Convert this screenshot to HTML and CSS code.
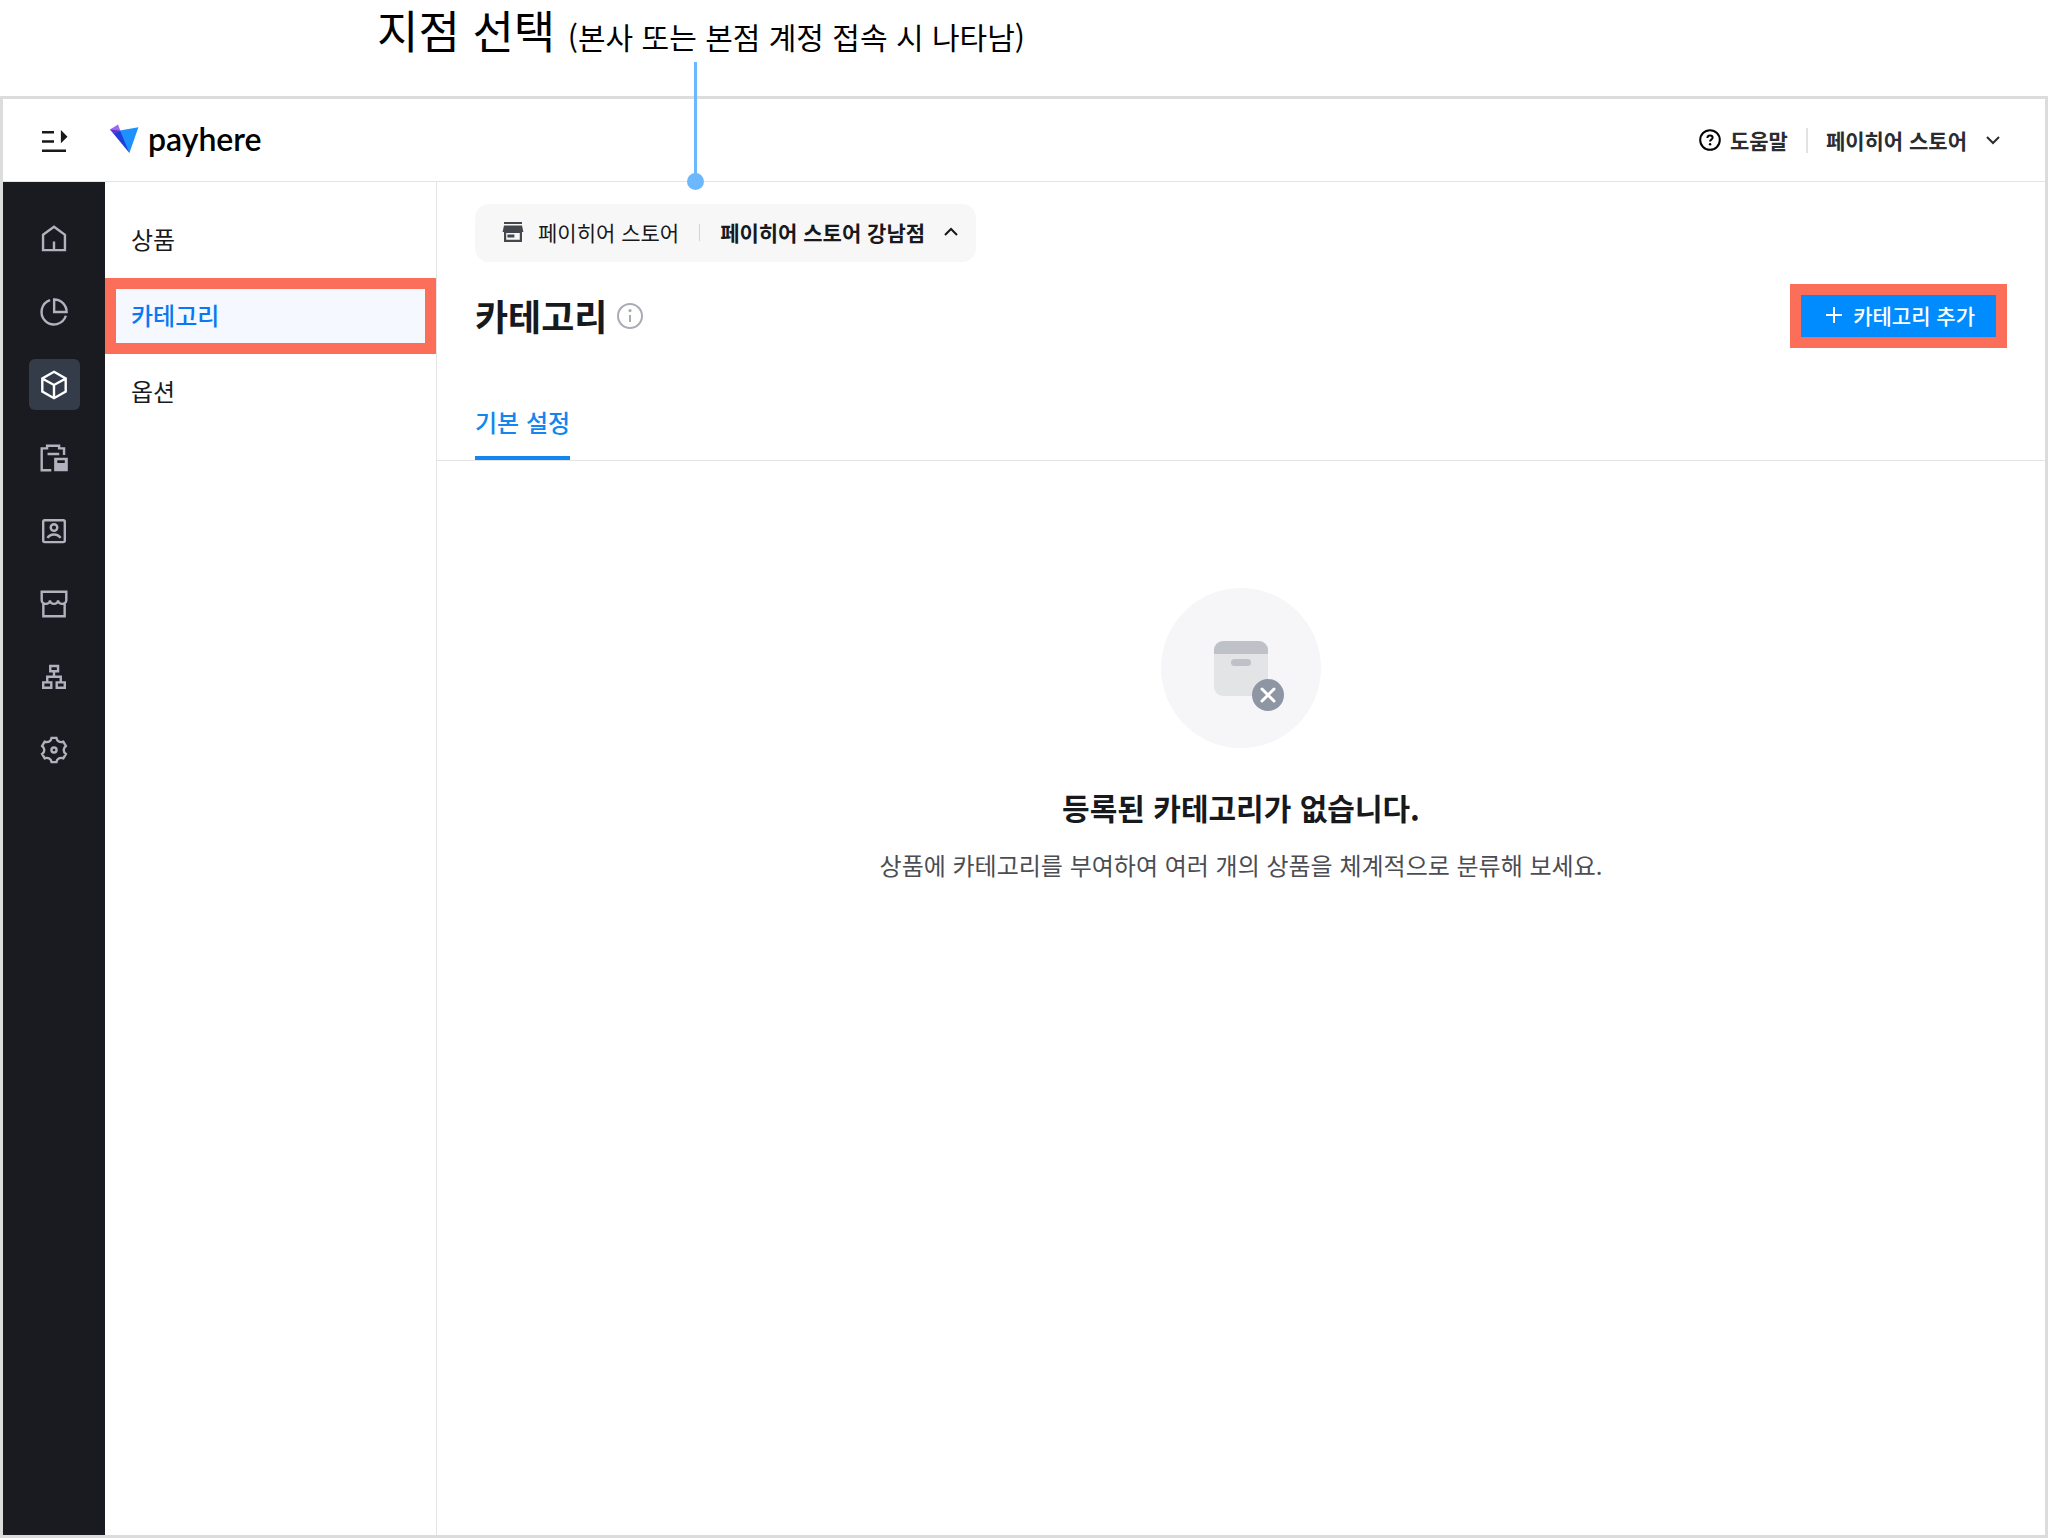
FILE: index.html
```html
<!DOCTYPE html>
<html lang="ko">
<head>
  <meta charset="UTF-8">
  <meta name="viewport" content="width=device-width, initial-scale=1.0">
  <title>카테고리 - payhere</title>
  <link rel="stylesheet" href="styles.css">
</head>
<body>
  <!-- 안내 문구 -->
  <div class="callout">
    <p class="callout-text">지점 선택 <small>(본사 또는 본점 계정 접속 시 나타남)</small></p>
    <span class="callout-line"></span>
  </div>

  <div class="frame">
    <!-- 헤더 -->
    <header class="header">
      <button type="button" class="menu-btn" aria-label="메뉴 펼치기">
        <svg class="icon" viewBox="0 0 24 24">
          <path d="M4 6.8h8M4 13h8M4 19.2h16" stroke-width="1.7"/>
          <path d="M16.6 5.4v8.8l4.4-4.4z" fill="currentColor" stroke="none"/>
        </svg>
      </button>
      <a href="#" class="logo">
        <svg class="logo-mark" viewBox="0 0 29 30">
          <path d="M7 7 28.4 3.2 19.4 29z" fill="#1e90ff"/>
          <path d="M0 5.6 10 6.6 19.4 29z" fill="#1f3fdc"/>
          <path d="M0 5.6 8 .6 10.4 6.7 4 9.2z" fill="#a066f0"/>
          <path d="M0 5.6 10.4 6.7 4.4 9.6z" fill="#5b35c9"/>
        </svg>
        <span>payhere</span>
      </a>
      <div class="header-right">
        <a href="#" class="help">
          <svg class="icon-help" viewBox="0 0 22 22">
            <circle cx="11" cy="11" r="9.8"/>
            <path d="M8.4 8.9c0-1.6 1.1-2.5 2.6-2.5s2.6.9 2.6 2.3c0 1.8-2.5 2-2.5 3.9"/>
            <circle cx="11.1" cy="15.2" r="1.2" fill="currentColor" stroke="none"/>
          </svg>
          도움말
        </a>
        <span class="divider"></span>
        <button type="button" class="account">
          페이히어 스토어
          <svg class="chevron" viewBox="0 0 16 16"><path d="M2 5l6 6 6-6"/></svg>
        </button>
      </div>
    </header>

    <div class="body">
      <!-- 아이콘 메뉴 -->
      <nav class="rail" aria-label="주 메뉴">
        <a href="#" class="rail-item" aria-label="홈">
          <svg class="icon" viewBox="0 0 24 24"><path d="M4.7 9.2 12 3.9l7.3 5.3v10.2H4.7zM12 13.6v5.8"/></svg>
        </a>
        <a href="#" class="rail-item" aria-label="매출">
          <svg class="icon" viewBox="0 0 24 24"><path d="M9.4 4.1a8.3 8.3 0 1 0 10.5 10.4M12.1 3.7V12h8.3a8.3 8.3 0 0 0-8.3-8.3z"/></svg>
        </a>
        <a href="#" class="rail-item active" aria-label="상품">
          <svg class="icon" viewBox="0 0 24 24"><path d="m12 3.2 7.8 4.4v8.8L12 20.8l-7.8-4.4V7.6zM4.4 7.8 12 12l7.6-4.2M12 12v8.6"/></svg>
        </a>
        <a href="#" class="rail-item" aria-label="주문">
          <svg class="icon" viewBox="0 0 24 24">
            <path d="M10.2 20.2H3.8V5.6h3.6V3.8h8v1.8h3.3V10M7.7 9.3h7.8"/>
            <path d="M12.1 11.8h9.1v9.1h-9.1zM14.2 13.5v1.8h5v-1.8z" fill="currentColor" fill-rule="evenodd" stroke="none"/>
          </svg>
        </a>
        <a href="#" class="rail-item" aria-label="고객">
          <svg class="icon" viewBox="0 0 24 24"><rect x="4.8" y="4.8" width="14.4" height="14.6" rx="1"/><circle cx="12" cy="9.7" r="2.2"/><path d="M7.6 16.6c1-1.5 2.6-2.3 4.4-2.3s3.4.8 4.4 2.3"/></svg>
        </a>
        <a href="#" class="rail-item" aria-label="매장">
          <svg class="icon" viewBox="0 0 24 24"><path d="M3.8 3.8h16.4v5.7a2.7 2.4 0 0 1-5.5 0 2.7 2.4 0 0 1-5.4 0 2.7 2.4 0 0 1-5.5 0zM4.9 11.6v8.6h14.2v-8.6"/></svg>
        </a>
        <a href="#" class="rail-item" aria-label="조직">
          <svg class="icon" viewBox="0 0 24 24"><path d="M9.5 4.7h5.2v3.5H9.5zM4.8 15.6h5.4v3.6H4.8zM13.8 15.6h5.4v3.6h-5.4zM12 8.2v3.6M7.5 15.6v-3.8h9v3.8"/></svg>
        </a>
        <a href="#" class="rail-item" aria-label="설정">
          <svg class="icon" viewBox="0 0 24 24"><path d="M10.4 3.9h3.2c.4 2.3 2.2 3.3 4.6 2.6l1.7 2.8c-1.9 1.5-1.9 3.9 0 5.4l-1.7 2.8c-2.4-.7-4.2.3-4.6 2.6h-3.2c-.4-2.3-2.2-3.3-4.6-2.6l-1.7-2.8c1.9-1.5 1.9-3.9 0-5.4l1.7-2.8c2.4.7 4.2-.3 4.6-2.6z"/><circle cx="12" cy="12" r="1.7"/></svg>
        </a>
      </nav>

      <!-- 하위 메뉴 -->
      <nav class="submenu" aria-label="상품 메뉴">
        <a href="#" class="submenu-item">상품</a>
        <a href="#" class="submenu-item active">카테고리</a>
        <a href="#" class="submenu-item">옵션</a>
      </nav>

      <!-- 본문 -->
      <main class="main">
        <div class="top">
          <button type="button" class="store-select">
            <svg class="icon-store" viewBox="0 0 22 22">
              <path d="M2 1h18v2H2zM2 4.4h18L21.4 11H20v10H2V11H.6zM4.2 12v6.8h13.6V12zM5.4 13.4h7v3h-7z" fill="currentColor" fill-rule="evenodd"/>
            </svg>
            <span>페이히어 스토어</span>
            <span class="store-divider"></span>
            <strong>페이히어 스토어 강남점</strong>
            <svg class="chevron" viewBox="0 0 16 16"><path d="M2 11l6-6 6 6"/></svg>
          </button>

          <div class="title-row">
            <h1>카테고리</h1>
            <button type="button" class="info-btn" aria-label="도움말 보기">
              <svg viewBox="0 0 28 28"><circle cx="14" cy="14" r="12"/><path d="M14 13v7"/><circle class="dot" cx="14" cy="8.6" r="1.6"/></svg>
            </button>
            <button type="button" class="add-btn">
              <svg viewBox="0 0 16 16"><path d="M8 0v16M0 8h16"/></svg>
              카테고리 추가
            </button>
          </div>
        </div>

        <div class="tabs">
          <a href="#" class="tab active">기본 설정</a>
        </div>

        <!-- 등록된 항목이 없을 때 -->
        <section class="empty">
          <svg class="empty-img" viewBox="0 0 160 160">
            <circle cx="80" cy="80" r="80" fill="#f6f6f9"/>
            <rect x="53" y="53" width="54" height="55" rx="9" fill="#e3e4e6"/>
            <path d="M53 66v-4a9 9 0 0 1 9-9h36a9 9 0 0 1 9 9v4z" fill="#bfc1c9"/>
            <rect x="70" y="71" width="20" height="7" rx="3.5" fill="#bfc1c9"/>
            <circle cx="107" cy="107" r="16" fill="#8e95a3"/>
            <path d="M101 101l12 12m0-12-12 12" stroke="#fff" stroke-width="3" stroke-linecap="round"/>
          </svg>
          <h2>등록된 카테고리가 없습니다.</h2>
          <p>상품에 카테고리를 부여하여 여러 개의 상품을 체계적으로 분류해 보세요.</p>
        </section>
      </main>
    </div>
  </div>
</body>
</html>
```

FILE: styles.css
```css
:root {
  --primary: #008cff;
  --primary-dark: #0a78f5;
  --mark: #fa6e5a;
  --pointer: #6bb8ff;
  --dark: #1a1b20;
  --border: #e4e4e4;
  --text: #18191c;
}
* { box-sizing: border-box; }
body {
  margin: 0;
  min-height: 100vh;
  display: flex;
  flex-direction: column;
  background: #fff;
  color: var(--text);
  font-family: "Noto Sans CJK KR", sans-serif;
  font-size: 21px;
}
a {
  color: inherit;
  text-decoration: none;
}
button {
  padding: 0;
  border: none;
  background: none;
  color: inherit;
  font: inherit;
  cursor: pointer;
}
svg {
  display: block;
  flex: none;
  fill: none;
  stroke: currentColor;
}
svg [fill] { stroke: none; }
.icon {
  width: 36px;
  height: 36px;
  stroke-width: 1.6;
}
.chevron {
  width: 16px;
  height: 16px;
  stroke-width: 2;
}

/* 안내 문구 */
.callout {
  position: relative;
  height: 96px;
  padding-left: 377px;
}
.callout-text {
  margin: 0;
  color: #000;
  font-size: 45px;
  line-height: 60px;
}
.callout-text small { font-size: 30px; }
.callout-line {
  position: absolute;
  top: 62px;
  left: 694px;
  width: 3px;
  height: 120px;
  background: var(--pointer);
}
.callout-line::after {
  content: "";
  position: absolute;
  bottom: -8px;
  left: -7px;
  width: 17px;
  height: 17px;
  border-radius: 50%;
  background: var(--pointer);
}

/* 화면 틀 */
.frame {
  flex: 1;
  display: flex;
  flex-direction: column;
  border: 3px solid #dcdcdc;
}
.body {
  flex: 1;
  display: flex;
}

/* 헤더 */
.header {
  display: flex;
  align-items: center;
  height: 83px;
  padding-right: 44px;
  border-bottom: 1px solid var(--border);
}
.menu-btn {
  display: flex;
  justify-content: center;
  width: 102px;
}
.logo {
  display: flex;
  align-items: center;
  gap: 9px;
  margin-left: 5px;
  padding-bottom: 2px;
  color: #000;
  font-family: Lato, sans-serif;
  font-size: 32px;
  font-weight: 600;
  line-height: 40px;
}
.logo-mark {
  width: 29px;
  height: 30px;
}
.header-right {
  display: flex;
  align-items: center;
  margin-left: auto;
  color: #2b2c30;
  font-weight: 700;
  line-height: 30px;
}
.help {
  display: flex;
  align-items: center;
  gap: 9px;
}
.icon-help {
  width: 22px;
  height: 22px;
  stroke-width: 2;
  color: #000;
}
.divider {
  width: 2px;
  height: 25px;
  margin: 0 18px;
  background: #e2e2e2;
}
.account {
  display: flex;
  align-items: center;
  gap: 18px;
}

/* 아이콘 메뉴 */
.rail {
  display: flex;
  flex-direction: column;
  align-items: center;
  gap: 22px;
  width: 102px;
  padding-top: 31px;
  background: var(--dark);
  color: #b0b3be;
}
.rail-item {
  display: flex;
  align-items: center;
  justify-content: center;
  width: 51px;
  height: 51px;
  border-radius: 6px;
}
.rail-item.active {
  background: #353c49;
  color: #fff;
}

/* 하위 메뉴 */
.submenu {
  width: 332px;
  padding-top: 20px;
  border-right: 1px solid var(--border);
  font-size: 24px;
}
.submenu-item {
  display: block;
  padding: 8px 15px 10px;
  border: 11px solid transparent;
  line-height: 36px;
}
.submenu-item.active {
  border-color: var(--mark);
  background: #f5f8fe;
  color: var(--primary-dark);
  font-weight: 500;
}

/* 본문 */
.main { flex: 1; }
.top { padding: 22px 38px 0; }
.store-select {
  display: flex;
  align-items: center;
  height: 58px;
  padding: 0 17px 2px 27px;
  border-radius: 14px;
  background: #f7f7f7;
}
.store-select strong {
  margin-right: 18px;
  font-weight: 700;
}
.icon-store {
  width: 22px;
  height: 22px;
  margin-right: 14px;
  color: #44474d;
}
.store-divider {
  width: 1px;
  height: 17px;
  margin: 0 20px;
  background: #d4d4d4;
}
.title-row {
  display: flex;
  align-items: center;
  margin-top: 22px;
}
h1 {
  margin: 0;
  padding-bottom: 2px;
  font-size: 36px;
  font-weight: 700;
  line-height: 48px;
}
.info-btn {
  margin-left: 9px;
  color: #a9abb5;
}
.info-btn svg {
  width: 28px;
  height: 28px;
  stroke-width: 2;
}
.info-btn .dot {
  fill: currentColor;
  stroke: none;
}
.add-btn {
  display: flex;
  align-items: center;
  gap: 11px;
  margin-left: auto;
  padding: 4px 21px 6px 25px;
  border: 11px solid var(--mark);
  background: var(--primary);
  color: #fff;
  font-weight: 500;
  line-height: 32px;
}
.add-btn svg {
  width: 16px;
  height: 16px;
  stroke-width: 2;
}
.tabs {
  display: flex;
  margin-top: 40px;
  padding-left: 38px;
  border-bottom: 1px solid var(--border);
}
.tab {
  padding: 16px 0;
  font-size: 24px;
  line-height: 36px;
}
.tab.active {
  border-bottom: 4px solid #1485ee;
  color: #1485ee;
  font-weight: 500;
}

/* 빈 화면 */
.empty {
  display: flex;
  flex-direction: column;
  align-items: center;
  padding: 127px 38px 60px;
  text-align: center;
}
.empty-img {
  width: 160px;
  height: 160px;
}
.empty h2 {
  margin: 37px 0 0;
  font-size: 30px;
  font-weight: 700;
  line-height: 44px;
}
.empty p {
  margin: 18px 0 0;
  color: #4c4d52;
  font-size: 24px;
  line-height: 36px;
}
```
